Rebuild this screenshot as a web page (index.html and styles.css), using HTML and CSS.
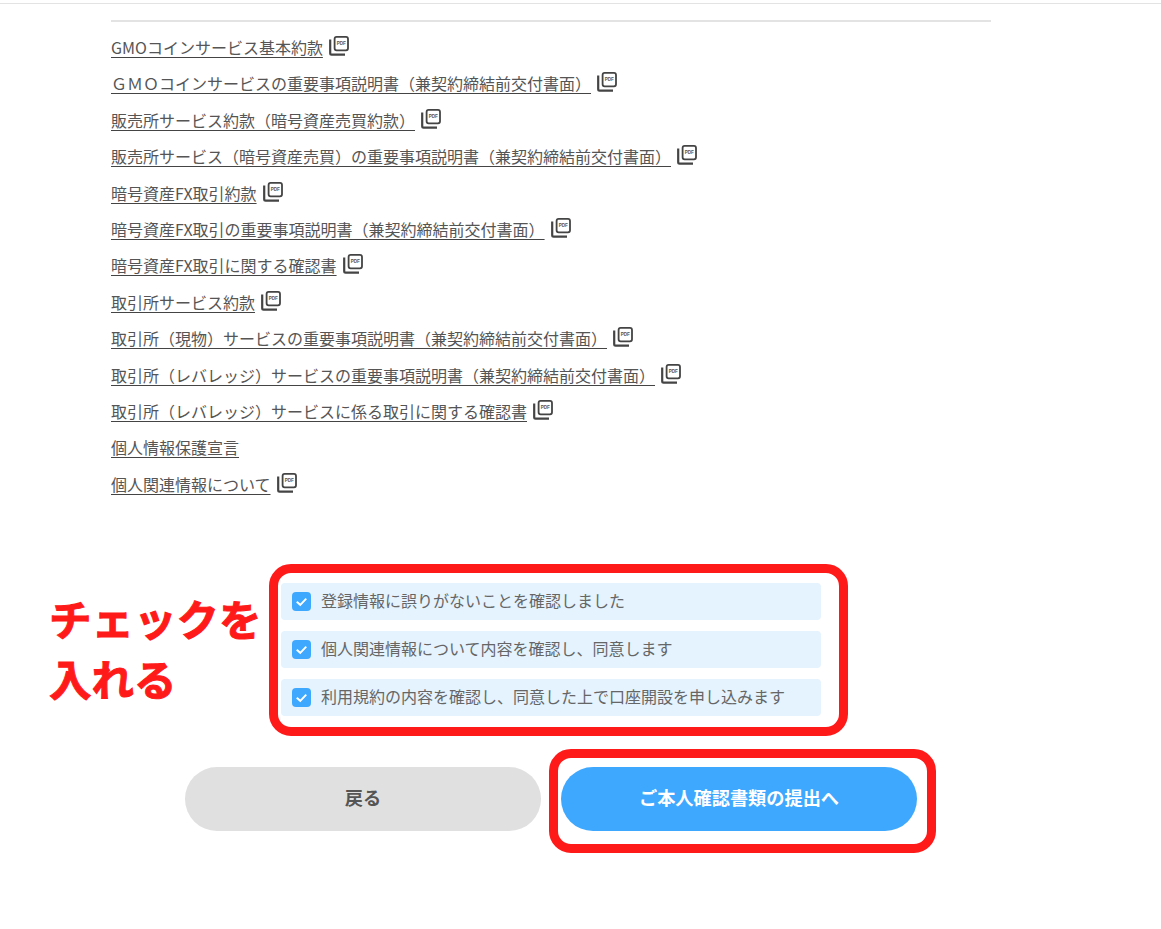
FILE: index.html
```html
<!DOCTYPE html>
<html lang="ja">
<head>
<meta charset="utf-8">
<title>口座開設</title>
<link rel="stylesheet" href="styles.css">
</head>
<body>
<svg class="sprite" aria-hidden="true">
  <symbol id="pdf" viewBox="0 0 20 20">
    <path d="M1.2 3.5v13.8a1.4 1.4 0 0 0 1.4 1.4H16" fill="none" stroke="#444" stroke-width="2.2"/>
    <rect x="5.6" y="0.9" width="13.4" height="13.4" rx="2" fill="#fff" stroke="#444" stroke-width="1.8"/>
    <text x="12.3" y="9.4" text-anchor="middle" class="pdf-text">PDF</text>
  </symbol>
</svg>
<main class="page">
  <ul class="docs">
    <li><a href="#">GMOコインサービス基本約款</a><svg class="pdf"><use href="#pdf"/></svg></li>
    <li><a href="#">ＧＭＯコインサービスの重要事項説明書（兼契約締結前交付書面）</a><svg class="pdf"><use href="#pdf"/></svg></li>
    <li><a href="#">販売所サービス約款（暗号資産売買約款）</a><svg class="pdf"><use href="#pdf"/></svg></li>
    <li><a href="#">販売所サービス（暗号資産売買）の重要事項説明書（兼契約締結前交付書面）</a><svg class="pdf"><use href="#pdf"/></svg></li>
    <li><a href="#">暗号資産FX取引約款</a><svg class="pdf"><use href="#pdf"/></svg></li>
    <li><a href="#">暗号資産FX取引の重要事項説明書（兼契約締結前交付書面）</a><svg class="pdf"><use href="#pdf"/></svg></li>
    <li><a href="#">暗号資産FX取引に関する確認書</a><svg class="pdf"><use href="#pdf"/></svg></li>
    <li><a href="#">取引所サービス約款</a><svg class="pdf"><use href="#pdf"/></svg></li>
    <li><a href="#">取引所（現物）サービスの重要事項説明書（兼契約締結前交付書面）</a><svg class="pdf"><use href="#pdf"/></svg></li>
    <li><a href="#">取引所（レバレッジ）サービスの重要事項説明書（兼契約締結前交付書面）</a><svg class="pdf"><use href="#pdf"/></svg></li>
    <li><a href="#">取引所（レバレッジ）サービスに係る取引に関する確認書</a><svg class="pdf"><use href="#pdf"/></svg></li>
    <li><a href="#">個人情報保護宣言</a></li>
    <li><a href="#">個人関連情報について</a><svg class="pdf"><use href="#pdf"/></svg></li>
  </ul>
  <section class="agree">
    <div class="check-row"><span class="box"><svg viewBox="0 0 20 20"><path d="M5 10.2l3.7 3.3 6.3-6.5" fill="none" stroke="#fff" stroke-width="2"/></svg></span>登録情報に誤りがないことを確認しました</div>
    <div class="check-row"><span class="box"><svg viewBox="0 0 20 20"><path d="M5 10.2l3.7 3.3 6.3-6.5" fill="none" stroke="#fff" stroke-width="2"/></svg></span>個人関連情報について内容を確認し、同意します</div>
    <div class="check-row"><span class="box"><svg viewBox="0 0 20 20"><path d="M5 10.2l3.7 3.3 6.3-6.5" fill="none" stroke="#fff" stroke-width="2"/></svg></span>利用規約の内容を確認し、同意した上で口座開設を申し込みます</div>
  </section>
  <div class="actions">
    <button class="btn btn-back">戻る</button>
    <button class="btn btn-next">ご本人確認書類の提出へ</button>
  </div>
</main>
<div class="mark mark-checks"></div>
<div class="mark mark-next"></div>
<p class="note">チェックを<br>入れる</p>
</body>
</html>
```
FILE: styles.css
```css
html, body { margin: 0; padding: 0; background: #fff; }
body {
  position: relative;
  height: 929px;
  overflow: hidden;
  font-family: "Noto Sans CJK JP", "Noto Sans", sans-serif;
  color: #555;
}
.sprite { display: none; }
.page {
  border-top: 1px solid #e3e3e3;
  margin-top: 3px;
  padding: 16px 170px 0 111px;
}
.docs {
  list-style: none;
  margin: 0;
  padding: 9px 0 0;
  border-top: 2px solid #e3e3e3;
}
.docs li {
  display: flex;
  align-items: flex-start;
  height: 36.4px;
  font-size: 16px;
  line-height: 32px;
}
.docs a {
  color: #555;
  text-decoration: underline;
  text-decoration-color: #444;
  text-underline-offset: 3px;
  white-space: nowrap;
}
.pdf { width: 20px; height: 20px; margin: 5px 0 0 6px; flex: none; }
.pdf-text { font: bold 4.6px "Liberation Sans", sans-serif; fill: #555; }
.agree {
  display: flex;
  flex-direction: column;
  gap: 11px;
  width: 540px;
  margin: 79px 0 0 170px;
}
.check-row {
  display: flex;
  align-items: center;
  gap: 10px;
  height: 37px;
  padding: 0 0 3px 11px;
  box-sizing: border-box;
  background: #e4f3fe;
  border-radius: 4px;
  font-size: 16px;
  line-height: 24px;
  color: #666;
}
.box {
  width: 19px;
  height: 19px;
  margin-top: 3px;
  background: #3ea8ff;
  border-radius: 4px;
  flex: none;
}
.box svg { display: block; width: 19px; height: 19px; }
.actions {
  display: flex;
  gap: 20px;
  margin: 51px 0 0 74px;
}
.btn {
  width: 356px;
  height: 64px;
  border: 0;
  padding: 0 0 4px;
  border-radius: 32px;
  font: bold 18.2px "Noto Sans CJK JP", "Noto Sans", sans-serif;
}
.btn-back { background: #e0e0e0; color: #555; }
.btn-next { background: #3ea8ff; color: #fff; }
.mark {
  position: absolute;
  border: 9px solid #ff1a1a;
  border-radius: 22px;
  box-sizing: border-box;
}
.mark-checks { left: 269px; top: 564px; width: 579px; height: 172px; }
.mark-next { left: 549px; top: 749px; width: 387px; height: 104px; }
.note {
  position: absolute;
  left: 49px;
  top: 588px;
  margin: 0;
  font-size: 42.5px;
  line-height: 60px;
  font-weight: 700;
  color: #ff1a1a;
  -webkit-text-stroke: 1px #ff1a1a;
}
```
